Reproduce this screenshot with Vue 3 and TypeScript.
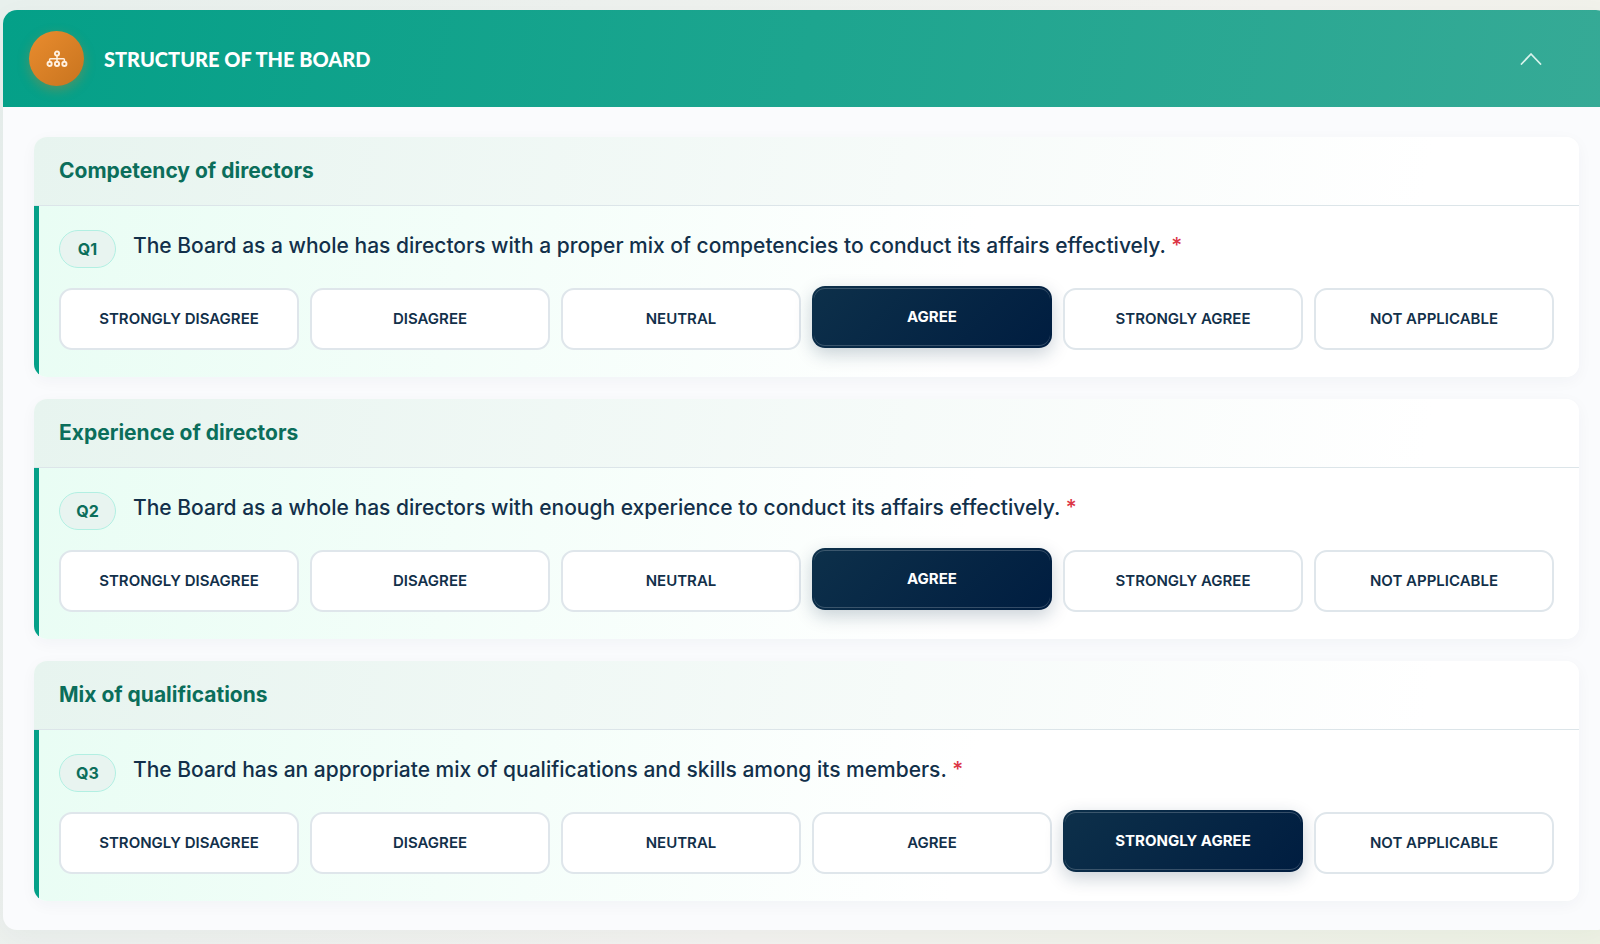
<script setup lang="ts">
import { ref } from 'vue'

interface Question {
  id: string
  heading: string
  text: string
  answer: string
}

const choices: string[] = ['Strongly Disagree', 'Disagree', 'Neutral', 'Agree', 'Strongly Agree', 'Not Applicable']

const open = ref(true)
const questions = ref<Question[]>([
  {
    id: 'Q1',
    heading: 'Competency of directors',
    text: 'The Board as a whole has directors with a proper mix of competencies to conduct its affairs effectively.',
    answer: 'Agree',
  },
  {
    id: 'Q2',
    heading: 'Experience of directors',
    text: 'The Board as a whole has directors with enough experience to conduct its affairs effectively.',
    answer: 'Agree',
  },
  {
    id: 'Q3',
    heading: 'Mix of qualifications',
    text: 'The Board has an appropriate mix of qualifications and skills among its members.',
    answer: 'Strongly Agree',
  },
])
</script>

<template>
  <main class="page">
    <section class="panel">
      <button class="panel-head" type="button" :aria-expanded="open" @click="open = !open">
        <span class="badge">
          <svg viewBox="0 0 22 18" width="22" height="18" fill="none" stroke="currentColor" stroke-width="1.9" aria-hidden="true">
            <circle cx="11" cy="3.6" r="2.1" />
            <circle cx="3.6" cy="13.9" r="2.1" />
            <circle cx="11" cy="13.9" r="2.1" />
            <circle cx="18.4" cy="13.9" r="2.1" />
            <path d="M11 5.8v6M3.600 11.800V9.600q0-.9.9-.9h13q.9 0 .9.9v2.200" stroke-width="1.500" />
          </svg>
        </span>
        <span class="panel-title">STRUCTURE OF THE BOARD</span>
        <svg class="chevron" :class="{ closed: !open }" viewBox="0 0 22 14" width="22" height="14" fill="none" stroke="currentColor" stroke-width="1.8" stroke-linecap="round" stroke-linejoin="round" aria-hidden="true">
          <path d="M1.5 12L11 2l9.5 10" />
        </svg>
      </button>

      <div v-if="open" class="panel-body">
        <article v-for="q in questions" :key="q.id" class="card">
          <h2 class="card-head">{{ q.heading }}</h2>
          <div class="card-body">
            <div class="question">
              <span class="tag">{{ q.id }}</span>
              <p :id="`${q.id}-text`" class="question-text">{{ q.text }} <span class="required">*</span></p>
            </div>
            <div class="options" role="radiogroup" :aria-labelledby="`${q.id}-text`">
              <label v-for="choice in choices" :key="choice" class="option" :class="{ selected: q.answer === choice }">
                <input v-model="q.answer" type="radio" :name="q.id" :value="choice" />
                <span>{{ choice.toUpperCase() }}</span>
              </label>
            </div>
          </div>
        </article>
      </div>
    </section>
  </main>
</template>

<style>
body {
  margin: 0;
}
</style>

<style scoped>
.page {
  box-sizing: border-box;
  min-height: 100vh;
  padding: 10px 0 14px 3px;
  overflow: hidden;
  font-family: Inter, "Liberation Sans", sans-serif;
  color: #12304a;
  background: linear-gradient(120deg, #e8f0ed 0%, #f3f2ef 60%, #eef2e4 100%);
}

.panel {
  margin-right: -10px;
  border-radius: 14px;
  overflow: hidden;
  background: #fafbfd;
  box-shadow: 0 8px 30px rgba(15, 47, 74, 0.04);
}

.panel-head {
  display: flex;
  align-items: center;
  gap: 20px;
  box-sizing: border-box;
  width: 100%;
  min-height: 97px;
  padding: 20px 68px 20px 26px;
  border: 0;
  color: #fff;
  background: linear-gradient(100deg, #04a088 0%, #36aa96 100%);
  font-family: inherit;
  text-align: left;
  cursor: pointer;
}

.badge {
  display: flex;
  align-items: center;
  justify-content: center;
  width: 55px;
  height: 55px;
  border-radius: 50%;
  color: #fff0df;
  background: linear-gradient(135deg, #e98c2e, #c8741f);
  box-shadow: 0 4px 12px rgba(217, 126, 38, 0.35);
}

.panel-title {
  flex: 1;
  font-family: Lato, Inter, sans-serif;
  font-size: 20px;
  font-weight: 900;
  line-height: 28px;
}

.chevron {
  color: #d8f3ec;
}

.chevron.closed {
  transform: rotate(180deg);
}

.panel-body {
  display: flex;
  flex-direction: column;
  gap: 22px;
  padding: 30px 31px 29px;
}

.card {
  border-radius: 13px;
  overflow: hidden;
  background: #fff;
  box-shadow: 0 4px 16px rgba(15, 47, 74, 0.04);
}

.card-head {
  margin: 0;
  padding: 20px 25px;
  border-bottom: 1px solid #dce5e9;
  color: #0b6e5b;
  background: linear-gradient(100deg, #e7f4ef 0%, #fff 90%);
  font-size: 21px;
  font-weight: 700;
  line-height: 28px;
}

.card-body {
  padding: 24px 25px 27px 20px;
  border-left: 5px solid #04a088;
  background: linear-gradient(100deg, #e9fdf4 0%, #fff 60%);
}

.question {
  display: flex;
  align-items: flex-start;
  gap: 17px;
  margin-bottom: 20px;
}

.tag {
  box-sizing: border-box;
  width: 57px;
  border: 1px solid #b2efe2;
  border-radius: 19px;
  color: #0b6e5b;
  background: #e8f4f0;
  font-size: 16px;
  font-weight: 700;
  line-height: 36px;
  text-align: center;
}

.question-text {
  flex: 1;
  margin: 0;
  font-size: 21px;
  font-weight: 500;
  line-height: 32px;
}

.required {
  color: #dc3545;
}

.options {
  display: grid;
  grid-template-columns: repeat(6, 1fr);
  gap: 11px;
}

.option {
  position: relative;
  display: flex;
  align-items: center;
  justify-content: center;
  box-sizing: border-box;
  min-height: 62px;
  border: 2px solid #dfe6eb;
  border-radius: 13px;
  background: #fff;
  font-size: 15px;
  font-weight: 600;
  line-height: 20px;
  text-align: center;
  cursor: pointer;
}

.option input {
  position: absolute;
  inset: 0;
  width: 100%;
  height: 100%;
  margin: 0;
  opacity: 0;
  cursor: pointer;
}

.option.selected {
  border-color: transparent;
  color: #fff;
  background: linear-gradient(135deg, #0d304a, #001d40) border-box;
  box-shadow: 0 6px 18px rgba(15, 47, 74, 0.22), inset 0 1px 0 rgba(255, 255, 255, 0.2), inset 0 -1px 0 rgba(255, 255, 255, 0.2);
  font-weight: 700;
  transform: translateY(-2px);
}
</style>
